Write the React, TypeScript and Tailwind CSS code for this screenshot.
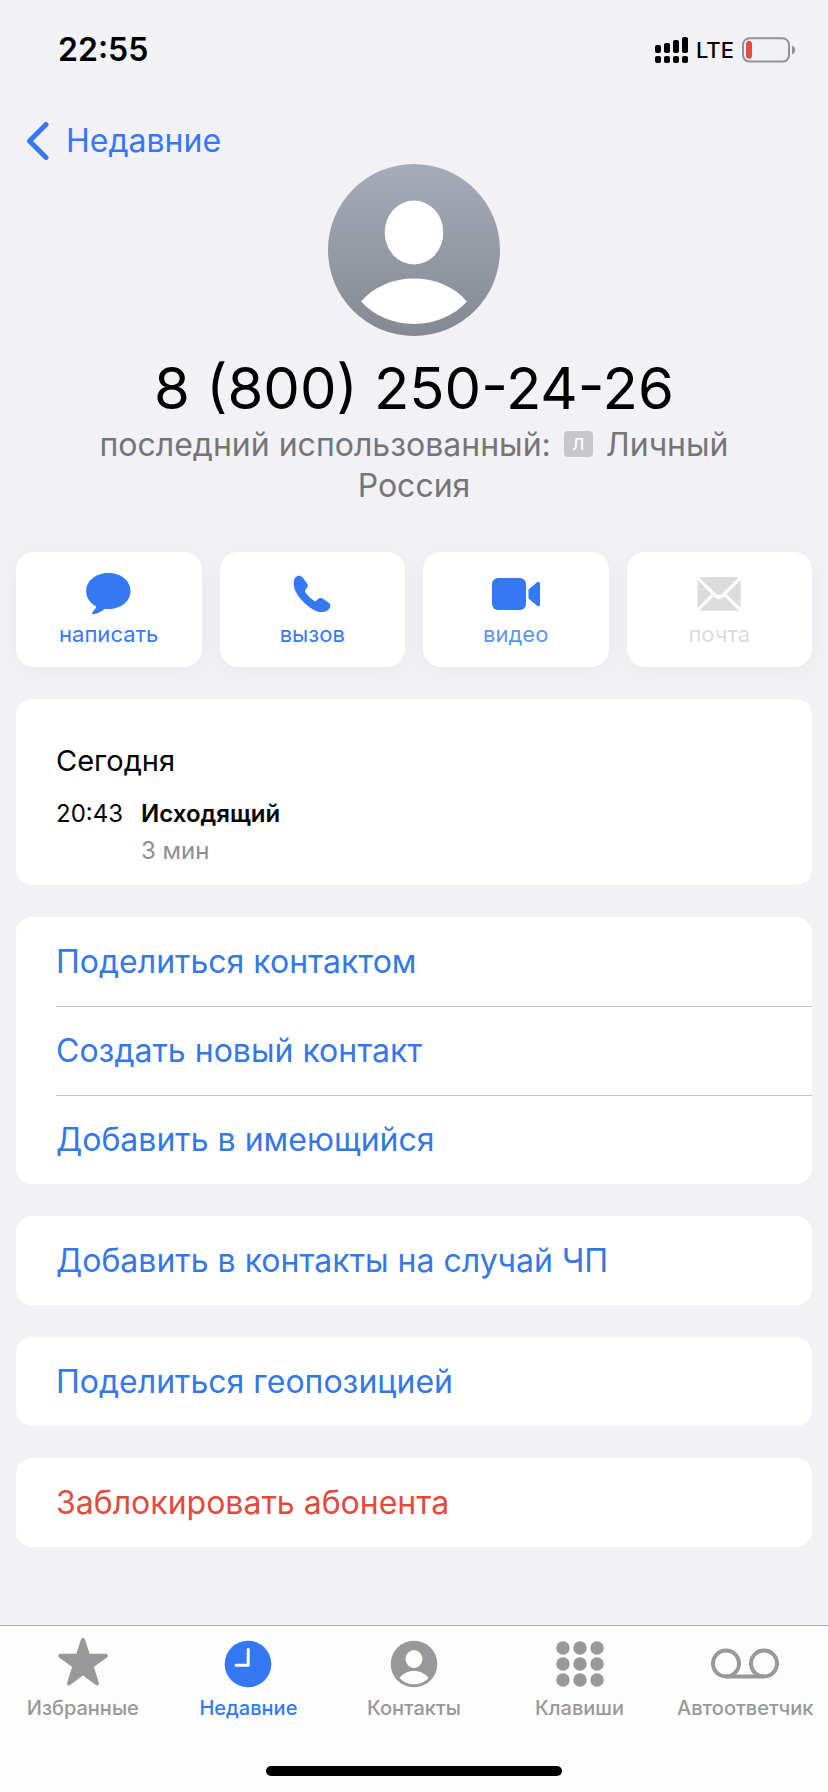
import type { ReactNode } from 'react';
import { clsx } from 'clsx';

interface QuickAction {
  label: string;
  icon: ReactNode;
  /** Colour of the icon and the caption */
  className: string;
  /** Overrides the caption colour alone */
  labelClassName?: string;
  disabled?: boolean;
}

interface TabItem {
  label: string;
  icon: ReactNode;
  active?: boolean;
}

function SignalIcon() {
  return (
    <svg width="33" height="26" viewBox="0 0 33 26" fill="currentColor" aria-hidden="true">
      <rect x="0" y="8" width="6" height="8" rx="2" />
      <rect x="9" y="6" width="6" height="10" rx="2" />
      <rect x="18" y="3" width="6" height="13" rx="2" />
      <rect x="27" y="0" width="6" height="16" rx="2" />
      <rect x="0" y="19" width="6" height="7" rx="2" />
      <rect x="9" y="19" width="6" height="7" rx="2" />
      <rect x="18" y="19" width="6" height="7" rx="2" />
      <rect x="27" y="19" width="6" height="7" rx="2" />
    </svg>
  );
}

function BatteryIcon() {
  return (
    <svg width="54" height="26" viewBox="0 0 54 26" aria-hidden="true">
      <rect x="1" y="1.2" width="46" height="23.4" rx="6.5" fill="none" stroke="#929296" strokeWidth="2" />
      <rect x="4" y="4" width="6" height="17.5" rx="2.8" fill="#ea4b3c" />
      <path d="M50 8.6c2 .8 3.2 2.4 3.2 4.4S52 16.600 50 17.400z" fill="#929296" />
    </svg>
  );
}

function BackIcon() {
  return (
    <svg width="24" height="40" viewBox="0 0 24 40" fill="none" aria-hidden="true">
      <path
        d="M20 3.5 3.5 20 20 36.5"
        stroke="currentColor"
        strokeWidth="5"
        strokeLinecap="round"
        strokeLinejoin="round"
      />
    </svg>
  );
}

function Avatar() {
  return (
    <svg className="size-43" viewBox="0 0 172 172" aria-hidden="true">
      <defs>
        <linearGradient id="avatar-fill" x1="0" y1="0" x2="0" y2="1">
          <stop offset="0" stopColor="#a5abb8" />
          <stop offset="1" stopColor="#858992" />
        </linearGradient>
      </defs>
      <circle cx="86" cy="86" r="86" fill="url(#avatar-fill)" />
      <ellipse cx="86" cy="68.5" rx="29.3" ry="32" fill="#fff" />
      <path d="M33 137.5C46 122.5 65 114.500 86 114.500s40 8 53 23C126 151.500 107 160 86 160s-40-8.500-53-22.500z" fill="#fff" />
    </svg>
  );
}

function MessageIcon() {
  return (
    <svg width="46" height="42" viewBox="0 0 46 42" fill="currentColor" aria-hidden="true">
      <path d="M22.5 0C35 0 44.5 7.8 44.5 18S35 36 22.5 36c-1.200 0-2.300 0-3.400-.2C15.700 38 11.500 41 7.600 41.200c-1.500 0-2-1.200-1-2.300 1.900-1.900 3.300-3.500 3.800-5.300C4.200 30.500.2 24.900.2 18 .2 7.800 10 0 22.500 0z" />
    </svg>
  );
}

function PhoneIcon() {
  return (
    <svg width="38" height="38" viewBox="0 0 38 38" fill="currentColor" aria-hidden="true">
      <path d="M4.200 1.100C6 .3 8.100.6 9.500 2.300l4.600 6.200c1 1.500 1 3.200-.2 4.600l-1.600 1.900c-.5.7-.5 1.300-.1 2 1 1.700 2.500 3.400 4.200 5 1.700 1.700 3.300 3 5 4 .7.400 1.300.4 1.900-.2l1.700-1.700c1.400-1.400 3.200-1.600 4.700-.6l6 4.200c1.800 1.300 2.200 3.300 1 5.300-1.500 2.600-4.100 4.100-7.500 4.100-6.400 0-12.900-4.400-18.500-9.900C5 21.500.7 14.800.7 8.500.7 5 1.900 2.200 4.200 1.100z" />
    </svg>
  );
}

function VideoIcon() {
  return (
    <svg width="48" height="32" viewBox="0 0 48 32" fill="currentColor" aria-hidden="true">
      <rect width="34" height="32" rx="6" />
      <path d="M36.500 11.500 44.800 4.400c1.600-1.400 3.200-.7 3.200 1.200v20.800c0 1.900-1.600 2.600-3.200 1.200l-8.300-7.100z" />
    </svg>
  );
}

function MailIcon() {
  return (
    <svg width="44" height="34" viewBox="0 0 44 34" fill="currentColor" aria-hidden="true">
      <path d="M2.300.6C2.800.2 3.400 0 4.100 0h36c.6 0 1.200.2 1.600.6L25.500 16.400c-2.200 2.100-4.800 2.100-7 0z" />
      <path d="M.5 2.800 14.700 17 .5 31z" />
      <path d="M43.500 2.800V31L29.300 17z" />
      <path d="M2.600 33.200 16.600 19.200l1.200 1.100c2.600 2.300 5.900 2.300 8.500 0l1.200-1.100 13.900 14c-.5.300-1 .5-1.600.5H4.200c-.6 0-1.100-.2-1.600-.5z" />
    </svg>
  );
}

function StarIcon() {
  return (
    <svg width="52" height="54" viewBox="0 0 52 54" className="shrink-0" fill="currentColor" aria-hidden="true">
      <path
        d="M26 3 31.200 18.800 48.800 18.800 34.500 29 40 46.500 26 36 12 46.500 17.500 29 3.200 18.800 20.800 18.800z"
        stroke="currentColor"
        strokeWidth="4"
        strokeLinejoin="round"
      />
    </svg>
  );
}

function ClockIcon() {
  return (
    <svg width="48" height="48" viewBox="0 0 48 48" fill="none" aria-hidden="true">
      <circle cx="24" cy="24" r="23.300" fill="currentColor" />
      <path d="M24.200 9.500v15.700H12" stroke="#fff" strokeWidth="3" strokeLinecap="round" strokeLinejoin="round" />
    </svg>
  );
}

function ContactIcon() {
  return (
    <svg width="48" height="48" viewBox="0 0 48 48" aria-hidden="true">
      <circle cx="24" cy="24" r="23.300" fill="currentColor" />
      <ellipse cx="24" cy="19" rx="8.500" ry="9" fill="#fdfdfe" />
      <path d="M9.500 38c2.800-4.300 8.300-7 14.500-7s11.700 2.700 14.500 7c-3.800 4-8.900 6.300-14.500 6.300S13.300 42 9.500 38z" fill="#fdfdfe" />
    </svg>
  );
}

function KeypadIcon() {
  const columns = [7, 24, 41];
  const rows = [8, 24, 40];
  return (
    <svg width="48" height="48" viewBox="0 0 48 48" fill="currentColor" aria-hidden="true">
      {rows.map((cy) => columns.map((cx) => <circle key={`${cx}-${cy}`} cx={cx} cy={cy} r="6.700" />))}
    </svg>
  );
}

function VoicemailIcon() {
  return (
    <svg width="68" height="48" viewBox="0 0 68 48" fill="none" stroke="currentColor" strokeWidth="4" aria-hidden="true">
      <circle cx="15" cy="23.500" r="13" />
      <circle cx="53" cy="23.500" r="13" />
      <path d="M15 36.500h38" />
    </svg>
  );
}

const quickActions: QuickAction[] = [
  { label: 'написать', icon: <MessageIcon />, className: 'text-[#3478f6]' },
  { label: 'вызов', icon: <PhoneIcon />, className: 'text-[#3478f6]' },
  { label: 'видео', icon: <VideoIcon />, className: 'text-[#3478f6]', labelClassName: 'text-[#5b96ea]' },
  { label: 'почта', icon: <MailIcon />, className: 'text-[#dcdcdd]', disabled: true },
];

const contactActions = [
  ['Поделиться контактом', 'Создать новый контакт', 'Добавить в имеющийся'],
  ['Добавить в контакты на случай ЧП'],
  ['Поделиться геопозицией'],
];

const tabs: TabItem[] = [
  { label: 'Избранные', icon: <StarIcon /> },
  { label: 'Недавние', icon: <ClockIcon />, active: true },
  { label: 'Контакты', icon: <ContactIcon /> },
  { label: 'Клавиши', icon: <KeypadIcon /> },
  { label: 'Автоответчик', icon: <VoicemailIcon /> },
];

function StatusBar() {
  return (
    <div className="flex h-25 items-center justify-between pr-8 pl-14.5">
      <span className="text-[32px] leading-10 font-semibold">22:55</span>
      <div className="flex items-center gap-2">
        <SignalIcon />
        <span className="text-[22px] leading-8 font-medium">LTE</span>
        <BatteryIcon />
      </div>
    </div>
  );
}

function ContactHeader() {
  return (
    <section className="flex flex-col items-center px-16 text-center">
      <Avatar />
      <h1 className="mt-4 text-[58px] leading-18">8 (800) 250-24-26</h1>
      <p className="text-[32px] leading-[41px] text-[#757578]">
        последний использованный:{' '}
        <span className="mx-1 inline-flex h-[26px] w-[29px] items-center justify-center rounded-sm bg-[#c6c6cb] align-[6px] text-base leading-none font-medium text-white">
          Л
        </span>{' '}
        Личный
        <br />
        Россия
      </p>
    </section>
  );
}

function QuickActionButton({ label, icon, className, labelClassName, disabled }: QuickAction) {
  return (
    <button
      type="button"
      disabled={disabled}
      className={clsx(
        'flex h-[115px] flex-col items-center rounded-[18px] bg-white pt-4.5 shadow-[0_4px_24px_rgba(0,0,0,0.04)]',
        className,
      )}
    >
      <span className="flex h-12 items-center">{icon}</span>
      <span className={clsx('text-[22px] leading-8', labelClassName)}>{label}</span>
    </button>
  );
}

function CallLog() {
  return (
    <section className="rounded-2xl bg-white px-10 pt-11 pb-4">
      <h2 className="text-[29px] leading-9">Сегодня</h2>
      <div className="mt-4 flex gap-4.5 text-2xl leading-[37px]">
        <time>20:43</time>
        <div>
          <p className="font-semibold">Исходящий</p>
          <p className="text-[#8e8e90]">3 мин</p>
        </div>
      </div>
    </section>
  );
}

function ActionGroup({ items, danger }: { items: string[]; danger?: boolean }) {
  return (
    <ul className="rounded-2xl bg-white pl-10">
      {items.map((item) => (
        <li key={item} className="h-[89px] border-t border-[#c6c6c8] first:border-t-0">
          <button
            type="button"
            className={clsx(
              'h-full w-full text-left text-[32px] leading-10',
              danger ? 'text-[#e14b3d]' : 'text-[#3478e8]',
            )}
          >
            {item}
          </button>
        </li>
      ))}
    </ul>
  );
}

function TabBar() {
  return (
    <footer className="mt-auto border-t border-[#a8a8ac] bg-[#fdfdfe] pb-4">
      <nav className="grid grid-cols-5 pt-3.5">
        {tabs.map((tab) => (
          <a
            key={tab.label}
            href="#"
            aria-current={tab.active ? 'page' : undefined}
            className={clsx(
              'flex flex-col items-center gap-1.5 text-xl font-medium',
              tab.active ? 'text-[#3478f6]' : 'text-[#98989a]',
            )}
          >
            <span className="flex h-12 items-center">{tab.icon}</span>
            {tab.label}
          </a>
        ))}
      </nav>
      <div className="mx-auto mt-11 h-2.5 w-74 rounded-full bg-black" />
    </footer>
  );
}

export default function App() {
  return (
    <div className="flex min-h-screen flex-col bg-[#f1f1f6] font-['Inter','Liberation_Sans',sans-serif] text-black">
      <StatusBar />
      <header className="flex h-16 items-center px-6.5 pt-4.5">
        <a href="#" className="flex items-center gap-4 text-[32px] leading-10 text-[#3478f6]">
          <BackIcon />
          Недавние
        </a>
      </header>

      <main className="flex flex-col px-4 pb-8">
        <ContactHeader />
        <div className="mt-11.5 grid grid-cols-4 gap-4.5">
          {quickActions.map((action) => (
            <QuickActionButton key={action.label} {...action} />
          ))}
        </div>
        <div className="mt-8 flex flex-col gap-8">
          <CallLog />
          {contactActions.map((items) => (
            <ActionGroup key={items[0]} items={items} />
          ))}
          <ActionGroup items={['Заблокировать абонента']} danger />
        </div>
      </main>

      <TabBar />
    </div>
  );
}
